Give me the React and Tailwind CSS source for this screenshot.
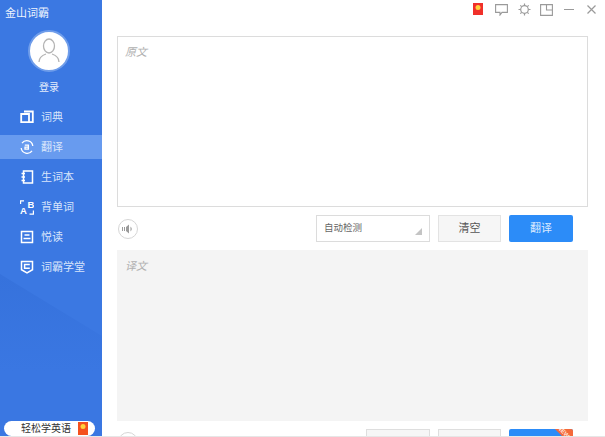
const navItems = [
    { label: '词典', icon: BookIcon },
    { label: '翻译', icon: TranslateIcon, active: true },
    { label: '生词本', icon: NotebookIcon },
    { label: '背单词', icon: WordsIcon },
    { label: '悦读', icon: ReadIcon },
    { label: '词霸学堂', icon: SchoolIcon },
];

function BookIcon() {
    return (
        <svg width="14" height="14" viewBox="0 0 14 14" fill="none" stroke="white" strokeWidth="1.800">
            <path d="M4 1.500h8.800v10.700H1.200V4H9v8" />
        </svg>
    );
}

function TranslateIcon() {
    return (
        <svg width="14" height="14" viewBox="0 0 14 14" fill="none" stroke="white" strokeWidth="1.300">
            <path d="M2 3.200A6 6 0 0 1 12.800 6" />
            <path d="M12 10.800A6 6 0 0 1 1.200 8" />
            <path d="M4.800 5.200h3.600v4H5V7.200h3.400" />
        </svg>
    );
}

function NotebookIcon() {
    return (
        <svg width="14" height="14" viewBox="0 0 14 14" fill="none" stroke="white" strokeWidth="1.500">
            <path d="M3.500 1h9v12h-9z" />
            <path d="M1.500 3.500h3.500M1.500 7H5M1.500 10.500h3.500" />
        </svg>
    );
}

function WordsIcon() {
    return (
        <svg width="14" height="15" viewBox="0 0 14 15" fill="none" stroke="white" strokeWidth="1.200">
            <path d="M.6 4V.8h3.400M13.400 10.500v3.700H9.500" />
            <text x="0" y="14" fontSize="9.500" fontWeight="700" fill="white" stroke="none" fontFamily="Liberation Sans">A</text>
            <text x="7.500" y="8" fontSize="9.500" fontWeight="700" fill="white" stroke="none" fontFamily="Liberation Sans">B</text>
        </svg>
    );
}

function ReadIcon() {
    return (
        <svg width="14" height="14" viewBox="0 0 14 14" fill="none" stroke="white" strokeWidth="1.500">
            <rect x="1.500" y="1.500" width="11" height="11" />
            <path d="M4.500 5h5M3.500 8.500h7" />
        </svg>
    );
}

function SchoolIcon() {
    return (
        <svg width="14" height="14" viewBox="0 0 14 14" fill="none" stroke="white" strokeWidth="1.500">
            <path d="M1.500 1.500h11v8.200L7 12.800 1.500 9.700z" />
            <path d="M9.800 4.500H4.600v3.800h5.200" />
        </svg>
    );
}

function RedPacket({ className = '' }) {
    return (
        <div className={`relative bg-[#f0302a] ${className}`}>
            <div className="absolute left-1/2 top-[2px] size-[5px] -translate-x-1/2 rounded-full bg-[#ffd23c]" />
        </div>
    );
}

function Speaker() {
    return (
        <div className="flex size-[20px] shrink-0 items-center justify-center rounded-full border border-[#d6d6d6] bg-white">
            <svg width="12" height="10" viewBox="0 0 12 10" fill="#9a9a9a">
                <path d="M0 3h1v4H0zM2 3h1v4H2zM4 3 7 .5v9L4 7z" />
                <path d="M8.500 2.500a3.500 3.500 0 0 1 0 5z" />
            </svg>
        </div>
    );
}

function Sidebar() {
    return (
        <aside className="relative flex w-[102px] shrink-0 flex-col bg-[#3b78e2] text-white">
            <svg className="absolute inset-x-0 bottom-0" width="102" height="165" viewBox="0 0 102 165">
                <defs>
                    <linearGradient id="sidebarFade" x1="0" y1="0" x2="0" y2="1">
                        <stop offset="0" stopColor="#3672dc" />
                        <stop offset="0.6" stopColor="#3a77e2" />
                    </linearGradient>
                </defs>
                <path d="M0 3 102 65V165H0z" fill="url(#sidebarFade)" />
            </svg>
            <div className="relative h-[26px] pl-[5px] pt-[6px] text-[11px] leading-[14px] text-[#eef4fe]">金山词霸</div>
            <div className="relative flex w-[98px] justify-center pt-[4px]">
                <div className="flex size-[42px] items-center justify-center rounded-full border-2 border-[#6f9dea] bg-white">
                    <svg width="22" height="26" viewBox="0 0 22 26" fill="none" stroke="#b4b4b4" strokeWidth="1.300">
                        <ellipse cx="11" cy="8" rx="5.500" ry="7" />
                        <path d="M1 24c0-5 4-7 7-8M21 24c0-5-4-7-7-8" />
                    </svg>
                </div>
            </div>
            <div className="relative mt-[9px] w-[98px] text-center text-[10px] leading-[14px] text-[#e4edfc]">登录</div>
            <nav className="relative mt-[7px] flex flex-col">
                {navItems.map(({ label, icon: Icon, active }) => (
                    <div
                        key={label}
                        className={`flex items-center gap-[7px] pl-[20px] text-[11px] ${active ? 'my-[3px] h-[24px] bg-[#689bef]' : 'h-[30px]'}`}
                    >
                        <Icon />
                        <span className="text-[#d8e5fb]">{label}</span>
                    </div>
                ))}
            </nav>
            <div className="relative mt-auto ml-[4px] flex h-[15px] w-[91px] items-center rounded-full bg-white pl-[17px] text-[10px] text-[#333333]">
                <span>轻松学英语</span>
                <RedPacket className="ml-[7px] h-[13px] w-[10px] bg-[#f4511e]" />
            </div>
        </aside>
    );
}

function TitleBar() {
    return (
        <div className="flex h-[36px] items-start pl-[371px] pt-[3px]">
            <RedPacket className="h-[12px] w-[10px]" />
            <svg className="ml-[12px] mt-[1px]" width="13" height="12" viewBox="0 0 13 12" fill="none" stroke="#9a9a9a" strokeWidth="1.100">
                <path d="M.6.6h11.800v7.800H7L5 11V8.400H.6z" />
            </svg>
            <svg className="ml-[10px]" width="13" height="13" viewBox="0 0 13 13" fill="none" stroke="#9a9a9a" strokeWidth="1.200">
                <circle cx="6.500" cy="6.500" r="3.800" />
                <path d="M6.500.5v2M6.500 10.500v2M.5 6.500h2M10.500 6.500h2M2.300 2.300l1.400 1.400M9.300 9.300l1.400 1.400M10.700 2.300 9.300 3.700M3.700 9.300l-1.400 1.400" />
            </svg>
            <svg className="ml-[9px] mt-[1px]" width="13" height="12" viewBox="0 0 13 12" fill="none" stroke="#9a9a9a" strokeWidth="1.100">
                <path d="M.6.6h11.800v10.800H.6zM6.500.6v5.400h5.900" />
            </svg>
            <div className="ml-[11px] mt-[6px] h-px w-[10px] bg-[#9a9a9a]" />
            <svg className="ml-[13px] mt-[2px]" width="9" height="9" viewBox="0 0 9 9" fill="none" stroke="#9a9a9a" strokeWidth="1.200">
                <path d="m.5.500 8 8M8.500.500l-8 8" />
            </svg>
        </div>
    );
}

function ActionRow() {
    return (
        <div className="flex h-[43px] items-center pl-px">
            <Speaker />
            <div className="ml-[178px] flex h-[27px] w-[114px] items-center justify-between border border-[#dcdcdc] bg-white pl-[7px] pr-[7px] text-[9.500px] text-[#666666]">
                <span>自动检测</span>
                <span className="mt-[6px] size-0 border-b-[7px] border-l-[7px] border-b-[#c4c4c4] border-l-transparent" />
            </div>
            <button className="ml-[8px] h-[27px] w-[63px] border border-[#e3e3e3] bg-[#f6f6f6] text-[11px] text-[#555555]">清空</button>
            <button className="ml-[8px] h-[27px] w-[64px] rounded-[2px] bg-[#2c8cf8] text-[11px] text-[#d9e9ff]">翻译</button>
        </div>
    );
}

function BottomRow() {
    return (
        <div className="mt-[8px] flex items-start pl-px">
            <div className="mt-[3px]">
                <Speaker />
            </div>
            <div className="ml-[228px] h-[27px] w-[64px] border border-[#dedede] bg-[#f6f6f6]" />
            <div className="ml-[8px] h-[27px] w-[63px] border border-[#dedede] bg-[#f6f6f6]" />
            <div className="relative ml-[8px] h-[27px] w-[64px] overflow-hidden rounded-[2px] bg-[#2c8cf8]">
                <div className="absolute -right-[23px] -top-[17px] flex h-[34px] w-[34px] rotate-45 items-end justify-start bg-[#f4693a] pl-[1px] text-[6px] font-bold leading-[8px] text-[#ffe6dc]">NEW</div>
            </div>
        </div>
    );
}

export default function App() {
    return (
        <div className="flex h-[437px] w-[605px] flex-col overflow-hidden bg-white font-['Liberation_Sans','Noto_Sans_CJK_SC',sans-serif]">
            <div className="flex h-[436px] overflow-hidden">
                <Sidebar />
                <main className="min-w-0 flex-1">
                    <TitleBar />
                    <div className="pl-[15px] pr-[17px]">
                        <div className="h-[171px] border border-[#dcdcdc] px-[7px] py-[8px] text-[11px] italic leading-[14px] text-[#b0b0b0]">原文</div>
                        <ActionRow />
                        <div className="h-[171px] bg-[#f4f4f4] px-[8px] py-[9px] text-[11px] italic leading-[14px] text-[#b0b0b0]">译文</div>
                        <BottomRow />
                    </div>
                </main>
            </div>
            <div className="h-px bg-[#e6e6e6]" />
        </div>
    );
}
